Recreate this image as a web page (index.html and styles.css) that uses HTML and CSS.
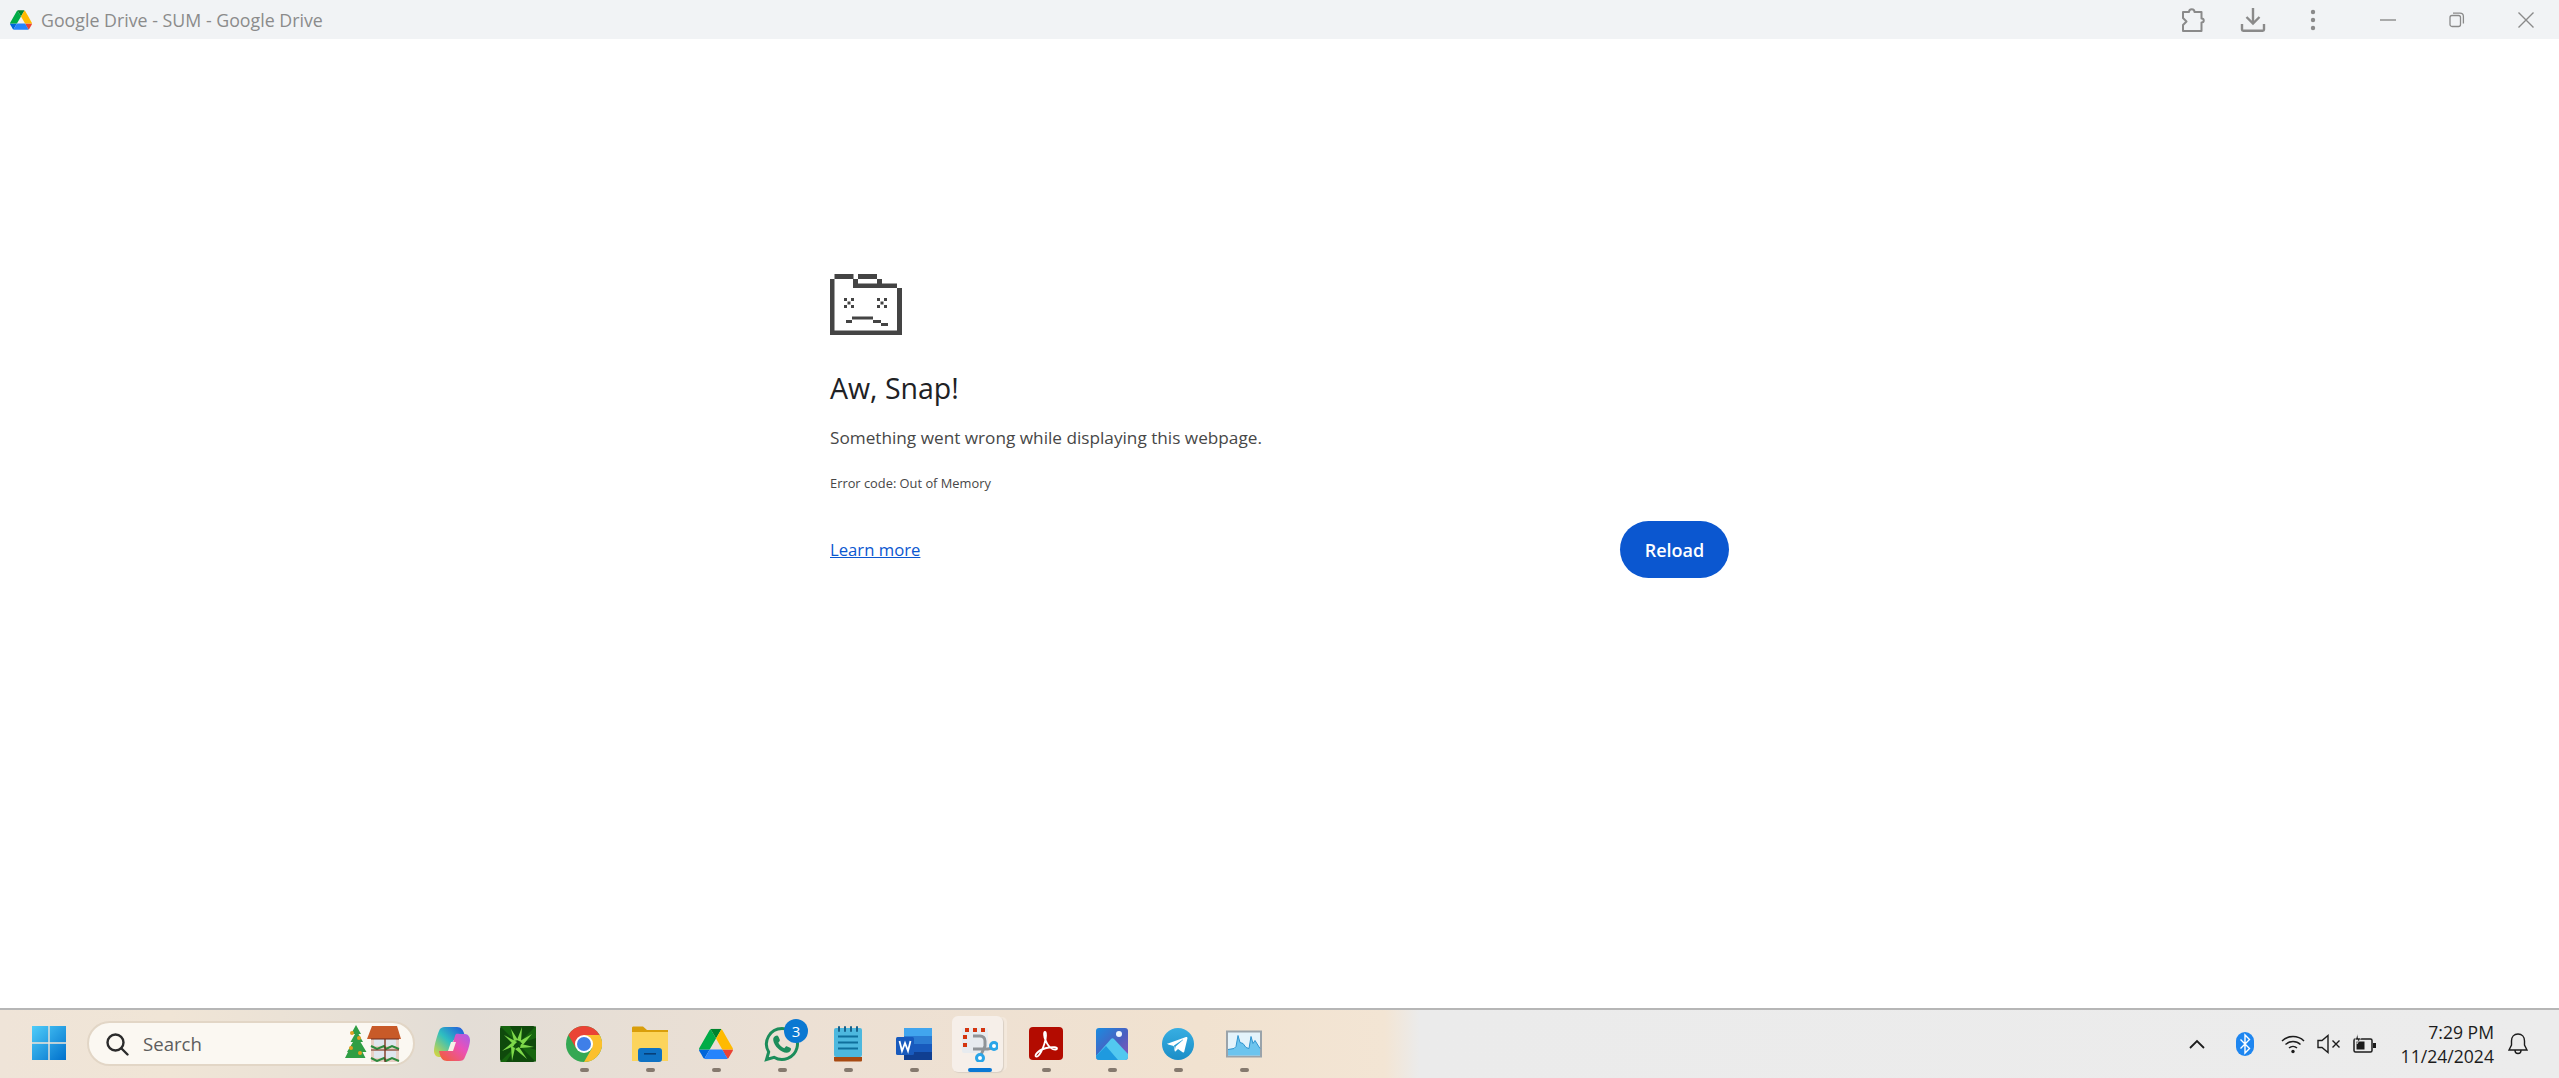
FILE: index.html
```html
<!DOCTYPE html>
<html lang="en">
<head>
    <meta charset="UTF-8">
    <title>Google Drive - SUM - Google Drive</title>
    <link rel="stylesheet" href="styles.css">
</head>
<body>
    <svg class="defs" width="0" height="0">
        <symbol id="drive" viewBox="0 0 87.3 78">
            <path d="m6.6 66.85 3.85 6.65c.8 1.4 1.95 2.5 3.3 3.3l13.75-23.8h-27.5c0 1.55.4 3.1 1.2 4.5z" fill="#0066da"/>
            <path d="m43.65 25-13.75-23.8c-1.35.8-2.5 1.9-3.3 3.3l-25.4 44a9.06 9.06 0 0 0 -1.2 4.5h27.5z" fill="#00ac47"/>
            <path d="m73.55 76.8c1.35-.8 2.5-1.9 3.3-3.3l1.6-2.75 7.65-13.25c.8-1.4 1.2-2.95 1.2-4.5h-27.502l5.852 11.5z" fill="#ea4335"/>
            <path d="m43.65 25 13.75-23.8c-1.35-.8-2.9-1.2-4.5-1.2h-18.5c-1.6 0-3.15.45-4.5 1.2z" fill="#00832d"/>
            <path d="m59.8 53h-32.3l-13.75 23.8c1.35.8 2.9 1.2 4.5 1.2h50.8c1.6 0 3.15-.45 4.5-1.2z" fill="#2684fc"/>
            <path d="m73.4 26.5-12.7-22c-.8-1.4-1.95-2.5-3.3-3.3l-13.75 23.8 16.15 28h27.45c0-1.55-.4-3.1-1.2-4.5z" fill="#ffba00"/>
        </symbol>
    </svg>

    <!-- window title bar -->
    <header class="titlebar">
        <svg class="title-logo" width="22" height="20"><use href="#drive"/></svg>
        <span class="title-text">Google Drive - SUM - Google Drive</span>
        <div class="title-actions">
            <div class="title-btn">
                <svg width="24" height="26" viewBox="0 0 24 26" fill="none" stroke="#8a8a8a" stroke-width="2" stroke-linejoin="round">
                    <path d="M2 5h6c0-3.800 5.500-3.800 5.500 0h7v6.500c3 0 3 4 0 4V24H2v-6l3.500-3.500L2 11z"/>
                </svg>
            </div>
            <div class="title-btn">
                <svg width="26" height="26" viewBox="0 0 26 26" fill="none" stroke="#8a8a8a" stroke-width="2.4">
                    <path d="M13 1v15M6.5 10l6.5 6.5 6.5-6.5M2 17v5.5c0 .8.4 1.2 1.2 1.2h19.6c.8 0 1.2-.4 1.2-1.2V17"/>
                </svg>
            </div>
            <div class="title-btn">
                <svg width="6" height="22" viewBox="0 0 6 22" fill="#8a8a8a">
                    <circle cx="3" cy="3" r="2.2"/><circle cx="3" cy="11" r="2.2"/><circle cx="3" cy="19" r="2.2"/>
                </svg>
            </div>
            <div class="win-btns">
                <div class="title-btn win-btn">
                    <svg width="16" height="16" viewBox="0 0 16 16" stroke="#8a8a8a" stroke-width="1.4"><path d="M0 8h16"/></svg>
                </div>
                <div class="title-btn win-btn">
                    <svg width="16" height="16" viewBox="0 0 16 16" fill="none" stroke="#8a8a8a" stroke-width="1.3">
                        <rect x="1" y="3.5" width="10.5" height="11" rx="2"/>
                        <path d="M4 1.2h7c2 0 3.4 1.4 3.4 3.4v7"/>
                    </svg>
                </div>
                <div class="title-btn win-btn">
                    <svg width="16" height="16" viewBox="0 0 16 16" stroke="#8a8a8a" stroke-width="1.4"><path d="M.5.5l15 15M15.500.5l-15 15"/></svg>
                </div>
            </div>
        </div>
    </header>

    <!-- crashed tab -->
    <main class="page">
        <div class="error-box">
            <svg class="sad-folder" width="72" height="62" viewBox="0 0 72 62" fill="#444">
                <rect x="0" y="5" width="4.500" height="56"/>
                <rect x="4.500" y="0" width="19" height="5"/>
                <rect x="28" y="0" width="19" height="5"/>
                <rect x="23" y="5" width="5" height="9"/>
                <rect x="47" y="5" width="5" height="5"/>
                <rect x="23" y="9.500" width="44" height="4.500"/>
                <rect x="67" y="14" width="5" height="47"/>
                <rect x="0" y="56.500" width="72" height="4.500"/>
                <path d="M14 24h3v3h-3zM21 24h3v3h-3zM17.500 27.500h3v3h-3zM14 31h3v3h-3zM21 31h3v3h-3z"/>
                <path d="M47 24h3v3h-3zM54 24h3v3h-3zM50.500 27.500h3v3h-3zM47 31h3v3h-3zM54 31h3v3h-3z"/>
                <rect x="16" y="46" width="6" height="3"/>
                <rect x="22" y="42.500" width="21" height="3"/>
                <rect x="43" y="46" width="8" height="3"/>
                <rect x="51" y="49" width="7" height="3"/>
            </svg>
            <h1>Aw, Snap!</h1>
            <p class="message">Something went wrong while displaying this webpage.</p>
            <p class="code">Error code: Out of Memory</p>
            <div class="error-actions">
                <a class="learn" href="#">Learn more</a>
                <button class="reload">Reload</button>
            </div>
        </div>
    </main>

    <!-- windows taskbar -->
    <footer class="taskbar">
        <div class="start">
            <svg width="36" height="36" viewBox="0 0 36 36">
                <defs>
                    <linearGradient id="win" x1="0" y1="0" x2="1" y2="1">
                        <stop offset="0" stop-color="#4fcdf9"/>
                        <stop offset="1" stop-color="#0070cc"/>
                    </linearGradient>
                </defs>
                <path fill="url(#win)" d="M1 1h16.300v16.300H1zM18.700 1H35v16.300H18.700zM1 18.700h16.300V35H1zM18.700 18.700H35V35H18.700z"/>
            </svg>
        </div>
        <div class="search">
            <svg class="search-icon" width="24" height="24" viewBox="0 0 24 24" fill="none" stroke="#2b2b2b" stroke-width="2.400">
                <circle cx="10.500" cy="10.500" r="8"/><path d="M16.500 16.500l6 6" stroke-linecap="round"/>
            </svg>
            <span class="search-text">Search</span>
            <svg class="search-art" width="56" height="37" viewBox="0 0 56 37">
                <path fill="#2f9e44" d="M11 0l5 9h-2.500l4.500 8h-2.500l6 10h-4l3 6H0l3-6h-1l6-10H5.500L10 9H6z"/>
                <circle cx="7" cy="8" r="2" fill="#e0a020"/><circle cx="14" cy="13" r="2" fill="#e0a020"/>
                <circle cx="6" cy="23" r="2" fill="#e0a020"/><circle cx="15" cy="28" r="2" fill="#e0a020"/>
                <path fill="#e8cfc4" d="M26 10h28v27H26z"/>
                <path fill="#c85a28" d="M27 1h25l4 13H22z"/>
                <path fill="#dfe6ee" d="M29 14h10v7H29zM41 14h10v7H41zM29 26h10v7H29zM41 26h10v7H41z"/>
                <path fill="none" stroke="#2d8a3e" stroke-width="2" d="M26 21l6 3 7-3 2 3 6-3 7 3M26 33l6 3 7-3 2 3 6-3 7 3"/>
                <path fill="none" stroke="#6b2b1c" stroke-width="1.200" d="M26 14h28M26 25h28M40 14v23"/>
            </svg>
        </div>

        <div class="apps">
            <div class="app">
                <svg width="36" height="36" viewBox="0 0 36 36">
                    <defs>
                        <linearGradient id="cop1" x1="0" y1="1" x2="1" y2="0">
                            <stop offset="0" stop-color="#e8d832"/><stop offset=".5" stop-color="#2fbfc0"/><stop offset="1" stop-color="#2050e0"/>
                        </linearGradient>
                        <linearGradient id="cop2" x1="0" y1="1" x2="1" y2="0">
                            <stop offset="0" stop-color="#f2602c"/><stop offset=".6" stop-color="#ea50b8"/><stop offset="1" stop-color="#a460ea"/>
                        </linearGradient>
                    </defs>
                    <path fill="url(#cop1)" d="M11 1h12c4 0 6 3 7 6l1 5h-7c-3 0-5 2-6 5l-3 10c-1 3-2 4-5 4H5c-3 0-5-3-5-6 0-5 3-15 5-20 1-3 3-4 6-4z"/>
                    <path fill="url(#cop2)" d="M25 35H13c-4 0-6-3-7-6l-1-4h7c3 0 5-2 6-5l3-10c1-3 2-2 5-2h5c3 0 5 3 5 6 0 5-3 13-5 17-1 3-3 4-6 4z"/>
                    <path fill="#f6efe6" d="M17 16h5l-3 9h-5z"/>
                </svg>
                <span class="dot dot-none"></span>
            </div>
            <div class="app">
                <svg width="36" height="36" viewBox="0 0 36 36">
                    <rect width="36" height="36" rx="3" fill="#0f4a0c"/>
                    <path fill="#17660f" d="M0 0l18 18L10 0zM36 36L18 18l18 6zM36 0L18 18 36 12zM0 36l18-18-12 18z"/>
                    <path fill="#7ed84a" d="M22 1l-5 13 4 2zM32 8L20 15l3 4zM34 21l-13-3-1 4zM27 33l-8-12-4 2zM12 35l3-13-4-2zM2 25l12-5-1-4zM4 9l10 10 3-3zM11 3l3 12 4-1z"/>
                </svg>
                <span class="dot dot-none"></span>
            </div>
            <div class="app">
                <svg width="36" height="36" viewBox="0 0 36 36">
                    <circle cx="18" cy="18" r="18" fill="#34a853"/>
                    <path fill="#ea4335" d="M2.400 9A18 18 0 0 1 33.600 9H18L10.200 22.500z"/>
                    <path fill="#fbc02d" d="M33.600 9A18 18 0 0 1 18 36L25.800 22.500 18 9z"/>
                    <circle cx="18" cy="18" r="9" fill="#fff"/>
                    <circle cx="18" cy="18" r="7" fill="#3f7fe8"/>
                </svg>
                <span class="dot"></span>
            </div>
            <div class="app">
                <svg width="36" height="36" viewBox="0 0 36 36">
                    <path fill="#d99e0b" d="M0 2c0-1 .6-1.500 1.500-1.500H11l4 3.500h21v28H0z"/>
                    <path fill="#fcd45c" d="M0 6h36v29H0z"/>
                    <rect x="6" y="22" width="24" height="14" rx="3" fill="#0f72c4"/>
                    <rect x="12" y="27" width="12" height="1.600" fill="#073f78"/>
                </svg>
                <span class="dot"></span>
            </div>
            <div class="app">
                <svg width="34" height="31" viewBox="0 0 87.300 78"><use href="#drive"/></svg>
                <span class="dot"></span>
            </div>
            <div class="app">
                <svg width="36" height="36" viewBox="0 0 36 36" fill="none">
                    <path stroke="#1c8d5b" stroke-width="3" d="M18 2.500A15.500 15.500 0 0 0 4.700 26L2.500 33.500 10 31.300A15.500 15.500 0 1 0 18 2.500z"/>
                    <path fill="#1c8d5b" d="M12.500 9.500c1 0 1.500.2 2 1.300l1.300 3c.2.700 0 1.200-.5 1.700l-1 1.200c1.300 2.500 3.300 4.300 6 5.500l1.300-1.500c.5-.5 1-.6 1.600-.3l2.900 1.400c1 .5 1 1 .8 2-.5 2-2.400 3-4.200 3-5.800-.4-12.800-6.500-13.500-12.800-.2-2.200 1.200-4.500 3.800-4.500z"/>
                </svg>
                <span class="badge">3</span>
                <span class="dot"></span>
            </div>
            <div class="app">
                <svg width="30" height="36" viewBox="0 0 30 36">
                    <path fill="#a84a12" d="M1 31h28v3c0 1-.5 1.500-1.500 1.500h-25C1.500 35.500 1 35 1 34z"/>
                    <rect x="1" y="2" width="28" height="29" rx="2" fill="#4db8de"/>
                    <path stroke="#17628c" stroke-width="2" d="M6 1v4M12 1v4M18 1v4M24 1v4" stroke-linecap="round"/>
                    <path stroke="#0f6f9c" stroke-width="2" d="M5 10.500h20M5 16.500h20M5 22.500h20"/>
                </svg>
                <span class="dot"></span>
            </div>
            <div class="app">
                <svg width="36" height="32" viewBox="0 0 36 32">
                    <rect x="8" y="0" width="28" height="8" fill="#41a5ee"/>
                    <rect x="8" y="8" width="28" height="8" fill="#2b7cd3"/>
                    <rect x="8" y="16" width="28" height="8" fill="#185abd"/>
                    <rect x="8" y="24" width="28" height="8" fill="#103f91"/>
                    <rect x="0" y="9" width="18" height="18" rx="1.500" fill="#185abd"/>
                    <path fill="none" stroke="#fff" stroke-width="1.800" d="M3.500 13l2.500 10 3-8 3 8 2.500-10"/>
                </svg>
                <span class="dot"></span>
            </div>
            <div class="app app-active">
                <svg width="36" height="36" viewBox="0 0 36 36" fill="none">
                    <rect x="0" y="2" width="26" height="25" rx="2" fill="#e7ebef"/>
                    <path stroke="#d4350f" stroke-width="4" d="M3 4h4M11 4h4M19 4h4M3 9v4M3 17v4"/>
                    <path stroke="#8f9498" stroke-width="3" d="M11 10h7c3 0 5 2 5 5v5l-5 11M11 23h15l9-2"/>
                    <circle cx="32" cy="20" r="3.500" fill="#fff" stroke="#2aa5e8" stroke-width="3"/>
                    <circle cx="18" cy="32" r="3.500" fill="#fff" stroke="#2aa5e8" stroke-width="3"/>
                </svg>
                <span class="dot dot-active"></span>
            </div>
            <div class="app">
                <svg width="34" height="34" viewBox="0 0 34 34">
                    <rect width="34" height="33" rx="4" fill="#b30b00"/>
                    <path fill="none" stroke="#fff" stroke-width="1.800" stroke-linejoin="round" d="M16 5c-1.500 0-1 5 .5 8 1.500 4 4 7.500 7 9 2 1 4.500 1 4.500-.5S24 20 20 20.500c-4 .5-9 2.500-11.500 5-2 2-2.500 3.500-1.500 4s3-1 5-4.500c2-3.500 5-11.500 5-16.500 0-2-.2-3.500-1-3.500z"/>
                </svg>
                <span class="dot"></span>
            </div>
            <div class="app">
                <svg width="32" height="32" viewBox="0 0 32 32">
                    <defs>
                        <linearGradient id="ph" x1="0" y1="0" x2="1" y2="1">
                            <stop offset="0" stop-color="#1a8ce0"/><stop offset=".55" stop-color="#4b5fc0"/><stop offset="1" stop-color="#8d55b8"/>
                        </linearGradient>
                    </defs>
                    <rect width="32" height="32" rx="3" fill="url(#ph)"/>
                    <circle cx="23" cy="6" r="3" fill="#eef6fc"/>
                    <path fill="#52c8f0" d="M0 28L15 11c1-1 2-1 3 0l14 15v3c0 2-1 3-3 3H4c-3 0-4-2-4-4z"/>
                    <path fill="#1f9adf" d="M0 28l10-10 12 14H4c-3 0-4-2-4-4z"/>
                </svg>
                <span class="dot"></span>
            </div>
            <div class="app">
                <svg width="32" height="32" viewBox="0 0 32 32">
                    <defs>
                        <linearGradient id="tg" x1="0" y1="0" x2="0" y2="1">
                            <stop offset="0" stop-color="#37aee2"/><stop offset="1" stop-color="#1b8ec7"/>
                        </linearGradient>
                    </defs>
                    <circle cx="16" cy="16" r="16" fill="url(#tg)"/>
                    <path fill="#fff" d="M6 15.500L24 9c1-.3 1.700.2 1.400 1.500L22.300 23.500c-.2 1-.9 1.200-1.700.7L16 21l-2.300 2.200c-.4.400-.8.300-1-.3l-1-5-5.500-1.500c-1-.3-1-.9-.2-1.400zM12 17.500l1 4 .6-3 7.400-6.500c.3-.3 0-.5-.4-.3z"/>
                </svg>
                <span class="dot"></span>
            </div>
            <div class="app">
                <svg width="36" height="27" viewBox="0 0 36 27">
                    <rect x="1" y="1" width="34" height="25" fill="#e4f3fb" stroke="#9aa3aa" stroke-width="2"/>
                    <path fill="#6cc4ee" d="M2 19l6-1 2-2 2-11 2 7 3 1 3 4 3 1 2-12 2 7 2-3 5 8v7H2z"/>
                    <path fill="none" stroke="#2f94d0" stroke-width="1" d="M2 19l6-1 2-2 2-11 2 7 3 1 3 4 3 1 2-12 2 7 2-3 5 8"/>
                </svg>
                <span class="dot"></span>
            </div>
        </div>

        <div class="tray">
            <div class="tray-item chevron">
                <svg width="16" height="10" viewBox="0 0 16 10" fill="none" stroke="#1c1c1c" stroke-width="1.800"><path d="M1 9l7-7 7 7"/></svg>
            </div>
            <div class="tray-item chevron">
                <svg width="18" height="24" viewBox="0 0 18 24">
                    <rect width="18" height="24" rx="9" fill="#1e86f0"/>
                    <path fill="none" stroke="#fff" stroke-width="1.400" d="M4.500 7.500l9 9-4.500 4.500V3l4.500 4.500-9 9"/>
                </svg>
            </div>
            <div class="tray-item tray-first">
                <svg width="24" height="20" viewBox="0 0 24 20" fill="none" stroke="#1c1c1c" stroke-width="1.500">
                    <path d="M1 7a16 16 0 0 1 22 0M4.500 10.500a11 11 0 0 1 15 0M8 14a6 6 0 0 1 8 0"/>
                    <circle cx="12" cy="17.500" r="1.700" fill="#1c1c1c" stroke="none"/>
                </svg>
            </div>
            <div class="tray-item">
                <svg width="24" height="20" viewBox="0 0 24 20" fill="none" stroke="#1c1c1c" stroke-width="1.400">
                    <path d="M1 6.500h4l6-5v17l-6-5H1zM15.500 6.500l7 7M22.500 6.500l-7 7"/>
                </svg>
            </div>
            <div class="tray-item">
                <svg width="24" height="20" viewBox="0 0 24 20">
                    <rect x="1" y="5" width="18" height="13" rx="1.500" fill="none" stroke="#1c1c1c" stroke-width="1.500"/>
                    <rect x="3.500" y="7.500" width="8" height="8" fill="#1c1c1c"/>
                    <rect x="20" y="9" width="3" height="5" fill="#1c1c1c"/>
                    <path d="M5 0l-3 6h3l-1 4 4-6H5z" fill="#1c1c1c" stroke="#eee" stroke-width=".6"/>
                </svg>
            </div>
            <div class="clock">
                <div>7:29 PM</div>
                <div>11/24/2024</div>
            </div>
            <div class="bell">
                <svg width="20" height="22" viewBox="0 0 20 22" fill="none" stroke="#1c1c1c" stroke-width="1.400">
                    <path d="M10 1c4 0 6.500 3 6.500 7v4l2.500 5H1l2.500-5V8c0-4 2.500-7 6.500-7zM7 17.500c0 4 6 4 6 0"/>
                </svg>
            </div>
        </div>
    </footer>
</body>
</html>
```

FILE: styles.css
```css
* {
    box-sizing: border-box;
}
body {
    margin: 0;
    height: 100vh;
    display: flex;
    flex-direction: column;
    overflow: hidden;
    background-color: #fff;
    font-family: "Open Sans", "Noto Sans", sans-serif;
}
.defs {
    display: none;
}

/* title bar */
.titlebar {
    height: 39px;
    flex: none;
    display: flex;
    align-items: center;
    padding-left: 10px;
    background-color: #f1f3f5;
}
.title-logo {
    flex: none;
}
.title-text {
    margin-left: 9px;
    font-size: 17.8px;
    color: #8b8b8b;
}
.title-actions {
    margin-left: auto;
    display: flex;
    align-items: center;
}
.title-btn {
    width: 60px;
    height: 39px;
    display: flex;
    align-items: center;
    justify-content: center;
}
.win-btns {
    margin-left: 12px;
    display: flex;
    gap: 3px;
}
.win-btn {
    width: 66px;
}

/* error page */
.page {
    flex: 1;
    padding-top: 235px;
}
.error-box {
    width: 899px;
    margin: 0 auto;
    color: #474747;
}
.sad-folder {
    display: block;
}
h1 {
    margin: 32px 0 0;
    font-size: 28.5px;
    line-height: 40px;
    font-weight: 400;
    color: #202124;
}
.message {
    margin: 17px 0 0;
    font-size: 17.2px;
    line-height: 26px;
}
.code {
    margin: 22px 0 0;
    font-size: 12.85px;
    line-height: 20px;
}
.error-actions {
    margin-top: 28px;
    display: flex;
    align-items: center;
    justify-content: space-between;
}
.learn {
    font-size: 16.7px;
    color: #0b57d0;
}
.reload {
    width: 109px;
    height: 57px;
    border: none;
    border-radius: 29px;
    background-color: #0b57d0;
    color: #fff;
    font-family: inherit;
    font-size: 18px;
    font-weight: 600;
}

/* taskbar */
.taskbar {
    height: 70px;
    flex: none;
    display: flex;
    align-items: flex-start;
    padding-left: 15px;
    border-top: 2px solid #b6b6b6;
    background: linear-gradient(90deg, #efe4d8 0, #f0e5d6 170px, #e3ddd6 460px, #ece0d4 800px, #f1e2d0 1200px, #f3e5d4 1385px, #ebebeb 1420px, #ececec 100%);
}
.start {
    width: 66px;
    padding: 15px 14px 0 16px;
}
.start svg {
    display: block;
}
.search {
    width: 328px;
    height: 45px;
    margin: 11px 0 0 6px;
    padding-left: 16px;
    display: flex;
    align-items: center;
    border: 2px solid #e2d6c6;
    border-radius: 23px;
    background-color: #fbf8f2;
}
.search-text {
    margin-left: 14px;
    font-size: 18.6px;
    color: #5d5d5d;
}
.search-art {
    margin-left: auto;
    margin-right: 12px;
}
.apps {
    margin-left: 4px;
    display: flex;
}
.app {
    position: relative;
    width: 66px;
    height: 62px;
    padding-top: 16px;
    display: flex;
    flex-direction: column;
    align-items: center;
}
.app svg {
    height: 36px;
    flex: none;
}
.dot {
    width: 9px;
    height: 5px;
    margin-top: 6px;
    border-radius: 3px;
    background-color: #85796e;
}
.dot-none {
    visibility: hidden;
}
.app-active {
    width: 51px;
    height: 56px;
    margin: 6px 10px 0 5px;
    padding: 10px 0 0 5px;
    border-radius: 6px;
    background-color: #f6efe9;
    box-shadow: 1px 1px 1px #d9cfc4, 5px 0 0 -1px #f3e8dc;
}
.dot-active {
    width: 24px;
    background-color: #0a78d4;
}
.badge {
    position: absolute;
    top: 9px;
    left: 35px;
    width: 24px;
    height: 24px;
    border-radius: 50%;
    background-color: #0a78d2;
    color: #fff;
    font-size: 15px;
    line-height: 24px;
    text-align: center;
}

/* system tray */
.tray {
    margin-left: auto;
    padding-right: 21px;
    height: 68px;
    display: flex;
    align-items: center;
}
.tray-item {
    width: 36px;
    display: flex;
    justify-content: center;
}
.chevron {
    width: 48px;
}
.tray-first {
    margin-left: 6px;
}
.clock {
    width: 111px;
    font-size: 17.6px;
    line-height: 24px;
    text-align: right;
    color: #1c1c1c;
}
.bell {
    width: 40px;
    margin-left: 4px;
    display: flex;
    justify-content: center;
}
```
